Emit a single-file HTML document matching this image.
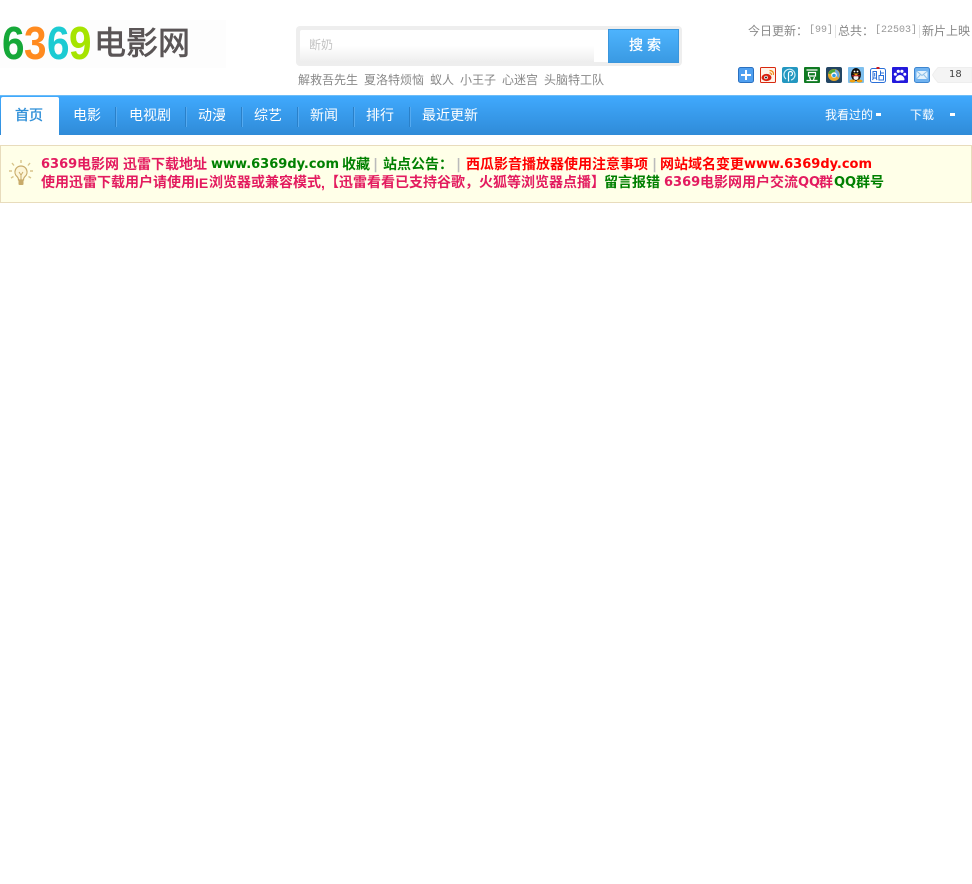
<!DOCTYPE html>
<html lang="zh"><head><meta charset="utf-8"><title>6369电影网</title>
<style>
*{box-sizing:border-box;margin:0;padding:0}
html,body{width:972px;height:884px;background:#fff;overflow:hidden}
body{position:relative;font-family:"Liberation Sans","WenQuanYi Zen Hei","Noto Sans CJK SC",sans-serif;font-size:12px;color:#888}
.a{position:absolute;white-space:nowrap;line-height:1}
.d{font-family:"Liberation Sans",sans-serif;font-weight:bold;font-size:46px;top:20px;transform:scaleX(.88);transform-origin:0 0}
.ic{position:absolute;top:67px;width:16px;height:16px;border-radius:2px}
.ic svg{display:block;width:16px;height:16px}
.nav{position:absolute;left:0;top:95px;width:972px;height:40px;background:linear-gradient(#40a9fd,#2f8bd8);border-top:1px solid #6dbdf8}
.nav b{position:absolute;font-weight:normal;color:#fff;font-size:14px;line-height:1;top:12px;white-space:nowrap}
.nav i{position:absolute;top:11px;width:1px;height:20px;background:#2a80c8;box-shadow:1px 0 0 #55aaf0}
.sq{position:absolute;top:17px;width:5px;height:3px;background:#fff}
.nt{position:absolute;left:0;top:145px;width:972px;height:58px;background:#ffffe8;border:1px solid #e8dcbc}
.nt span{position:absolute;white-space:nowrap;font-weight:bold;font-size:14px;line-height:18px;font-family:"DejaVu Sans","WenQuanYi Zen Hei","Noto Sans CJK SC",sans-serif}
.nt .l{font-size:13px}
.r{color:#e31b5f}.g{color:#008000}.x{color:#f00}.s{color:#bbb}
.t1{top:10px}.t2{top:28px}
</style></head><body>
<div style="position:absolute;left:0;top:20px;width:226px;height:48px;background:#fdfdfd"></div>
<span class="a d" style="left:2px;color:#15a838">6</span>
<span class="a d" style="left:24px;color:#ff8a1f">3</span>
<span class="a d" style="left:47px;color:#1ccbd2">6</span>
<span class="a d" style="left:69px;color:#a6e400">9</span>
<span class="a" style="left:94px;top:27px;font-size:32px;color:#5a5556;-webkit-text-stroke:.7px #5a5556">电影网</span>

<div style="position:absolute;left:296px;top:26px;width:386px;height:40px;background:#eee;border-radius:4px"></div>
<div style="position:absolute;left:300px;top:30px;width:308px;height:32px;background:linear-gradient(#fff 50%,#eee);border-radius:2px 0 0 2px"></div>
<div style="position:absolute;left:594px;top:30px;width:14px;height:32px;background:#fff"></div>
<span class="a" style="left:309px;top:39px;font-size:12px;color:#c4c4c4">断奶</span>
<div style="position:absolute;left:608px;top:29px;width:71px;height:34px;background:linear-gradient(#4db3fd,#3a9ae3);border:1px solid #3b96dc"></div>
<span class="a" style="left:629px;top:38px;font-size:14px;color:#fff;letter-spacing:4px;-webkit-text-stroke:.3px #fff">搜索</span>

<span class="a" style="left:298px;top:74px">解救吾先生</span>
<span class="a" style="left:364px;top:74px">夏洛特烦恼</span>
<span class="a" style="left:430px;top:74px">蚁人</span>
<span class="a" style="left:460px;top:74px">小王子</span>
<span class="a" style="left:502px;top:74px">心迷宫</span>
<span class="a" style="left:544px;top:74px">头脑特工队</span>

<span class="a" style="left:748px;top:25px">今日更新：</span>
<span class="a" style="left:809px;top:26px;font-size:10px;color:#999;font-family:'Liberation Mono',monospace">[99]</span>
<span class="a" style="left:835px;top:25px;width:1px;height:13px;background:#e4e4e4"></span>
<span class="a" style="left:838px;top:25px">总共：</span>
<span class="a" style="left:875px;top:26px;font-size:10px;color:#999;font-family:'Liberation Mono',monospace">[22503]</span>
<span class="a" style="left:919px;top:25px;width:1px;height:13px;background:#e4e4e4"></span>
<span class="a" style="left:922px;top:25px">新片上映</span>

<div class="ic" style="left:738px"><svg viewBox="0 0 16 16"><rect x=".5" y=".5" width="15" height="15" rx="2" fill="#4f9ff0" stroke="#2a70c0"/><path d="M8 3v10M3 8h10" stroke="#fff" stroke-width="2"/></svg></div>
<div class="ic" style="left:760px"><svg viewBox="0 0 16 16"><rect x=".5" y=".5" width="15" height="15" rx="1" fill="#fff3e8" stroke="#d8280f"/><ellipse cx="6.500" cy="10.500" rx="5" ry="3.600" fill="#d8200f"/><circle cx="6" cy="10.500" r="1.800" fill="#fff"/><circle cx="6" cy="10.500" r="1" fill="#222"/><path d="M9.500 3.500c3 0 4.500 2 3.800 4.500M9.500 5.800c1.500 0 2.200 1 1.800 2.200" fill="none" stroke="#f08a18" stroke-width="1.200"/></svg></div>
<div class="ic" style="left:782px"><svg viewBox="0 0 16 16"><rect width="16" height="16" rx="2" fill="#2397c0"/><path d="M4 12a5.500 5.500 0 1 1 5 1" fill="none" stroke="#cfeef8" stroke-width="1.200"/><path d="M6.500 14.500V6.500a2 2 0 1 1 2 2" fill="none" stroke="#fff" stroke-width="1.200"/></svg></div>
<div class="ic" style="left:804px"><svg viewBox="0 0 16 16"><rect width="16" height="16" rx="1" fill="#0f7a22"/><path d="M2.500 3h11M4.500 5.500h7v3.500h-7zM5.500 10l1 3M10.500 10l-1 3M2.500 13.500h11" fill="none" stroke="#fff" stroke-width="1.200"/></svg></div>
<div class="ic" style="left:826px"><svg viewBox="0 0 16 16"><rect width="16" height="16" rx="2" fill="#234563"/><circle cx="8" cy="8" r="6" fill="#e8a828"/><path d="M2.500 7a5.500 5.500 0 0 1 7-4.500l-1.500 4z" fill="#48a838"/><path d="M9 2.500a5.500 5.500 0 0 1 3.500 8.500l-3-3z" fill="#6aa8e0"/><circle cx="8" cy="8" r="2.800" fill="#fff"/><circle cx="8" cy="8.500" r="1.800" fill="#2f9be0"/></svg></div>
<div class="ic" style="left:848px"><svg viewBox="0 0 16 16"><rect width="16" height="16" rx="1" fill="#7fc0ee"/><ellipse cx="8" cy="7.500" rx="5" ry="6.500" fill="#111"/><ellipse cx="8" cy="10.500" rx="2.500" ry="2.500" fill="#f4f4f4"/><circle cx="6.500" cy="4.500" r=".9" fill="#fff"/><circle cx="9.500" cy="4.500" r=".9" fill="#fff"/><path d="M5 6.500h6L8 8.500z" fill="#f0a010"/><path d="M4 8.800h8" stroke="#d02020"/><ellipse cx="4.500" cy="14" rx="3" ry="1.500" fill="#f0a010"/><ellipse cx="11.500" cy="14" rx="3" ry="1.500" fill="#f0a010"/></svg></div>
<div class="ic" style="left:870px"><svg viewBox="0 0 16 16"><rect x=".5" y="1.500" width="15" height="14" rx="2" fill="#fff" stroke="#2a6fd8"/><path d="M3 4.500h3.500v6.500H3zM4.700 6v3.500M3.500 11l-1 2M6 11l1 2M10.500 3.500v5M10.500 6H14M9 8.500h4.500V13H9z" fill="none" stroke="#2a6fd8"/><rect x="6.500" y="0" width="3" height="2" fill="#d01818"/></svg></div>
<div class="ic" style="left:892px"><svg viewBox="0 0 16 16"><rect width="16" height="16" rx="1" fill="#2319dc"/><path d="M8 8c-2 0-4.500 2.200-4.500 4.200S6 14 8 13.500s4.500.7 4.500-1.300S10 8 8 8z" fill="#fff"/><circle cx="3.300" cy="7.300" r="1.500" fill="#fff"/><circle cx="6.300" cy="4.300" r="1.600" fill="#fff"/><circle cx="9.900" cy="4.300" r="1.600" fill="#fff"/><circle cx="12.800" cy="7.300" r="1.500" fill="#fff"/></svg></div>
<div class="ic" style="left:914px"><svg viewBox="0 0 16 16"><rect x=".5" y=".5" width="15" height="15" rx="2" fill="#6fb2f0" stroke="#3d86d0"/><rect x="2.500" y="4" width="11" height="8" fill="#e4f2fc"/><path d="M2.500 4l5.500 4.500L13.500 4M2.500 12l4-4.500M13.500 12l-4-4.500" fill="none" stroke="#8fc0e8"/></svg></div>
<svg style="position:absolute;left:932px;top:67px" width="40" height="16" viewBox="0 0 40 16"><path d="M40 .5H6L3 4 .5 8 3 12l3 3.500h34z" fill="#f4f4f4" stroke="#eee"/></svg>
<span class="a" style="left:949px;top:70px;font-size:10px;color:#444;font-family:'DejaVu Sans',sans-serif">18</span>

<div class="nav">
<div style="position:absolute;left:1px;top:1px;width:58px;height:39px;background:#fff;border-radius:2px 2px 0 0"></div>
<b style="left:15px;color:#2f8fd8;-webkit-text-stroke:.35px #2f8fd8">首页</b>
<b style="left:73px">电影</b><i style="left:115px"></i>
<b style="left:129px">电视剧</b><i style="left:185px"></i>
<b style="left:198px">动漫</b><i style="left:241px"></i>
<b style="left:254px">综艺</b><i style="left:297px"></i>
<b style="left:310px">新闻</b><i style="left:353px"></i>
<b style="left:366px">排行</b><i style="left:409px"></i>
<b style="left:422px">最近更新</b>
<b style="left:825px;top:13px;font-size:12px">我看过的</b><span class="sq" style="left:876px"></span>
<b style="left:910px;top:13px;font-size:12px">下载</b><span class="sq" style="left:950px"></span>
</div>

<div class="nt">
<svg style="position:absolute;left:7px;top:13px" width="26" height="30" viewBox="0 0 26 30"><path d="M13 7a6 6 0 0 0-4 10.500c1 1 1.500 2 1.500 3.500h5c0-1.500.5-2.500 1.500-3.500A6 6 0 0 0 13 7z" fill="#fdf6d8" stroke="#c8ab6a" stroke-width="1.200"/><path d="M11 13l2 3 2-3M13 16v5" fill="none" stroke="#c8ab6a"/><rect x="10.500" y="21" width="5" height="5" rx="1" fill="#c8ab6a"/><path d="M13 1v3M4 4l2 2.500M22 4l-2 2.500M1 12h3M22 12h3M3 19l2.500-1.500M23 19l-2.500-1.500" stroke="#d8c48a" stroke-width="1.400"/></svg>
<span class="r l t1" style="left:40px">6369</span><span class="r t1" style="left:76px">电影网</span>
<span class="r t1" style="left:122px">迅雷下载地址</span>
<span class="g l t1" style="left:210px">www.6369dy.com</span>
<span class="g t1" style="left:341px">收藏</span>
<span class="s t1" style="left:372px">|</span>
<span class="g t1" style="left:382px">站点公告：</span>
<span class="s t1" style="left:455px">|</span>
<span class="x t1" style="left:465px">西瓜影音播放器使用注意事项</span>
<span class="s t1" style="left:651px">|</span>
<span class="x t1" style="left:659px">网站域名变更</span><span class="x l t1" style="left:743px">www.6369dy.com</span>

<span class="r t2" style="left:40px">使用迅雷下载用户请使用</span>
<span class="r t2" style="left:194px;font-family:'Liberation Sans',sans-serif">IE</span>
<span class="r t2" style="left:208px">浏览器或兼容模式</span>
<span class="r t2" style="left:320px;font-family:'Liberation Sans',sans-serif">,</span>
<span class="r t2" style="left:324px">【迅雷看看已支持谷歌，火狐等浏览器点播】</span>
<span class="g t2" style="left:603px">留言报错</span>
<span class="r l t2" style="left:663px">6369</span><span class="r t2" style="left:699px">电影网用户交流</span>
<span class="r l t2" style="left:797px">QQ</span><span class="r t2" style="left:818px">群</span>
<span class="g l t2" style="left:833px">QQ</span><span class="g t2" style="left:855px">群号</span>
</div>
</body></html>
